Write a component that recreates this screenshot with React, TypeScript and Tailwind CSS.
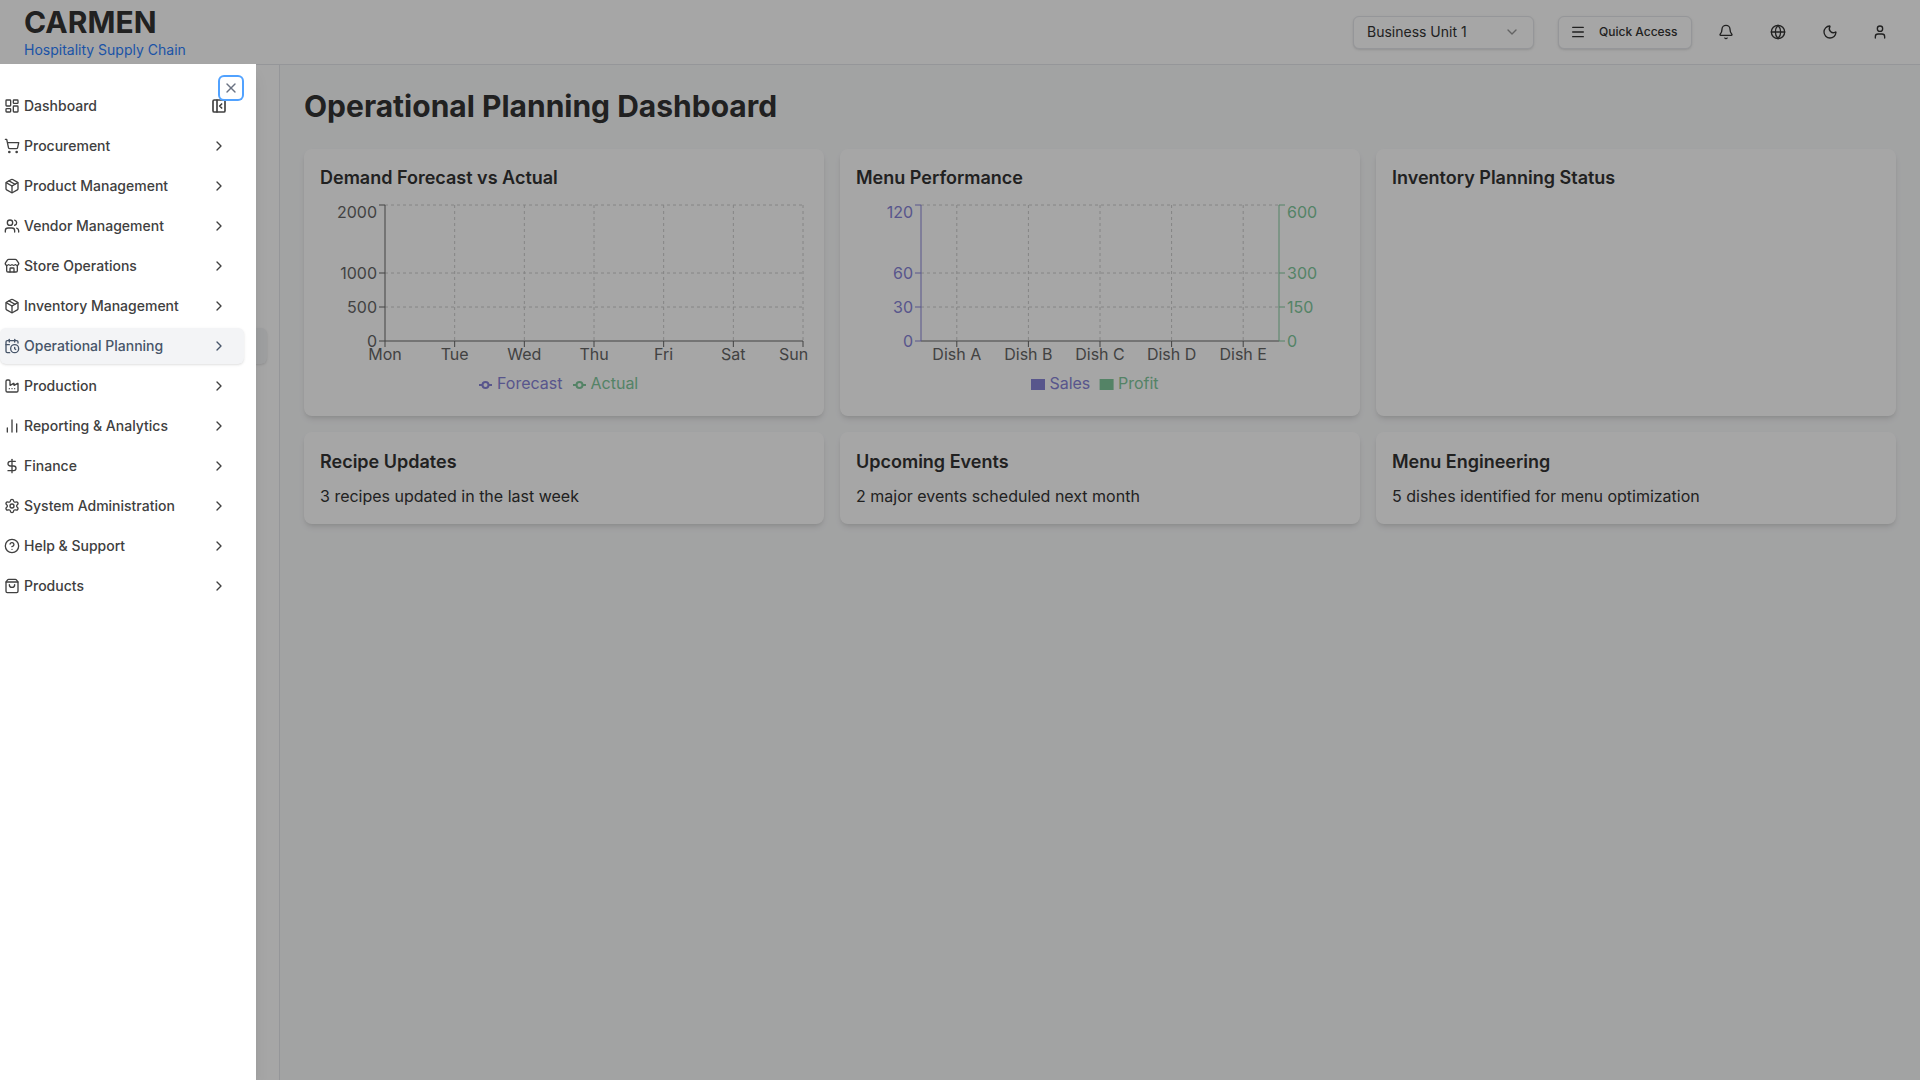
import React from "react";
import {
  LayoutDashboard, ShoppingCart, Package, Users, Store, CalendarClock, Factory,
  ChartNoAxesColumn, DollarSign, Settings, CircleHelp, ShoppingBag, ChevronRight,
  ChevronDown, Menu, Bell, Globe, Moon, User, X, PanelLeftClose,
} from "lucide-react";

const items = [
  { label: "Product Management", icon: Package },
  { label: "Vendor Management", icon: Users },
  { label: "Store Operations", icon: Store },
  { label: "Inventory Management", icon: Package },
  { label: "Operational Planning", icon: CalendarClock, active: true },
  { label: "Production", icon: Factory },
  { label: "Reporting & Analytics", icon: ChartNoAxesColumn },
  { label: "Finance", icon: DollarSign },
  { label: "System Administration", icon: Settings },
  { label: "Help & Support", icon: CircleHelp },
  { label: "Products", icon: ShoppingBag },
];

const GRID = "#cccccc";
const AXIS = "#666666";
const PURPLE = "#8884d8";
const GREEN = "#82ca9d";
const ys = [5, 73, 107, 141];

function DemandChart() {
  const x0 = 65;
  const x1 = 483;
  const xs = [65, 134.67, 204.33, 274, 343.67, 413.33, 483];
  const labels = ["Mon", "Tue", "Wed", "Thu", "Fri", "Sat", "Sun"];
  const yl = ["2000", "1000", "500", "0"];
  const yt = [12, 73, 107, 141];
  return (
    <svg width="488" height="200" className="block">
      <g stroke={GRID} strokeDasharray="3 3" fill="none">
        {ys.slice(0, 3).map((y) => <line key={y} x1={x0} x2={x1} y1={y} y2={y} />)}
        {xs.slice(1).map((x) => <line key={x} x1={x} x2={x} y1={5} y2={141} />)}
      </g>
      <g stroke={AXIS} fill="none">
        <line x1={x0} x2={x0} y1={5} y2={141} />
        <line x1={x0} x2={x1} y1={141} y2={141} />
        {ys.map((y) => <line key={y} x1={x0 - 6} x2={x0} y1={y} y2={y} />)}
        {xs.map((x) => <line key={x} x1={x} x2={x} y1={141} y2={147} />)}
      </g>
      <g fill={AXIS} fontSize="16" fontFamily="Inter, sans-serif">
        {yl.map((t, i) => <text key={t} x={57} y={yt[i] + 6} textAnchor="end">{t}</text>)}
        {labels.map((t, i) => (
          <text key={t} x={i === 6 ? 473.5 : xs[i]} y={160} textAnchor="middle">{t}</text>
        ))}
      </g>
      <g fontSize="16" fontFamily="Inter, sans-serif">
        <g stroke={PURPLE} strokeWidth="2" fill="none">
          <line x1={159} x2={172} y1={185} y2={185} />
          <circle cx={165.5} cy={185} r={3} fill="#ffffff" />
        </g>
        <text x={177} y={189} fill={PURPLE}>Forecast</text>
        <g stroke={GREEN} strokeWidth="2" fill="none">
          <line x1={253} x2={266} y1={185} y2={185} />
          <circle cx={259.5} cy={185} r={3} fill="#ffffff" />
        </g>
        <text x={270.5} y={189} fill={GREEN}>Actual</text>
      </g>
    </svg>
  );
}

function MenuChart() {
  const x0 = 65;
  const x1 = 423;
  const xs = [100.8, 172.4, 244, 315.6, 387.2];
  const labels = ["Dish A", "Dish B", "Dish C", "Dish D", "Dish E"];
  const yt = [12, 73, 107, 141];
  const left = ["120", "60", "30", "0"];
  const right = ["600", "300", "150", "0"];
  return (
    <svg width="488" height="200" className="block">
      <g stroke={GRID} strokeDasharray="3 3" fill="none">
        {ys.slice(0, 3).map((y) => <line key={y} x1={x0} x2={x1} y1={y} y2={y} />)}
        {xs.map((x) => <line key={x} x1={x} x2={x} y1={5} y2={141} />)}
      </g>
      <g stroke={AXIS} fill="none">
        <line x1={x0} x2={x1} y1={141} y2={141} />
        {xs.map((x) => <line key={x} x1={x} x2={x} y1={141} y2={147} />)}
      </g>
      <g stroke={PURPLE} fill="none">
        <line x1={x0} x2={x0} y1={5} y2={141} />
        {ys.map((y) => <line key={y} x1={x0 - 6} x2={x0} y1={y} y2={y} />)}
      </g>
      <g stroke={GREEN} fill="none">
        <line x1={x1} x2={x1} y1={5} y2={141} />
        {ys.map((y) => <line key={y} x1={x1} x2={x1 + 6} y1={y} y2={y} />)}
      </g>
      <g fontSize="16" fontFamily="Inter, sans-serif">
        {left.map((t, i) => <text key={t} x={57} y={yt[i] + 6} textAnchor="end" fill={PURPLE}>{t}</text>)}
        {right.map((t, i) => <text key={t} x={431} y={yt[i] + 6} fill={GREEN}>{t}</text>)}
        {labels.map((t, i) => <text key={t} x={xs[i]} y={160} textAnchor="middle" fill={AXIS}>{t}</text>)}
        <rect x={175} y={179} width={14} height={11} fill={PURPLE} />
        <text x={193.4} y={189} fill={PURPLE}>Sales</text>
        <rect x={243.6} y={179} width={14} height={11} fill={GREEN} />
        <text x={262} y={189} fill={GREEN}>Profit</text>
      </g>
    </svg>
  );
}

function Card({ title, children, top }: { title: string; children?: React.ReactNode; top?: boolean }) {
  return (
    <div className="rounded-lg bg-white p-4 shadow-md">
      <h3 className={`text-lg font-semibold text-[#333333] ${top ? "leading-[26px]" : "leading-7"}`}>{title}</h3>
      {children}
    </div>
  );
}

function NavRow({ label, icon: Icon, active }: { label: string; icon: React.ElementType; active?: boolean }) {
  return (
    <div className={`mb-1 flex h-9 w-[244px] items-center rounded-md pl-1 pr-3 ${active ? "bg-gray-100 text-[#475569] shadow-sm" : "text-[#404040]"}`}>
      <Icon size={16} strokeWidth={2} className="shrink-0" />
      <span className="ml-[4px] flex-1 text-sm font-medium">{label}</span>
      <ChevronRight size={16} className="mr-[5px] shrink-0" />
    </div>
  );
}

export default function App() {
  return (
    <div className="relative flex h-[1080px] flex-col overflow-hidden bg-gray-50 font-['Inter',sans-serif]">
      <header className="flex h-[65px] shrink-0 items-center justify-between border-b border-gray-200 bg-white pl-6 pr-8">
        <div className="flex flex-col">
          <div className="text-3xl leading-[36px] font-bold text-[#333333]">CARMEN</div>
          <div className="text-sm leading-5 text-blue-500">Hospitality Supply Chain</div>
        </div>
        <div className="flex items-center text-[#333333]">
          <div className="flex h-[33px] w-[181px] items-center justify-between rounded-md border border-gray-200 bg-white px-[13px] text-sm shadow-sm">
            <span>Business Unit 1</span>
            <ChevronDown size={16} className="opacity-50" />
          </div>
          <div className="ml-6 flex h-[33px] w-[134px] items-center rounded-md border border-gray-200 bg-white pl-[11px] text-xs font-medium shadow-sm">
            <Menu size={16} />
            <span className="ml-[13px]">Quick Access</span>
          </div>
          <div className="ml-[26px] flex items-center gap-9">
            <Bell size={16} />
            <Globe size={16} />
            <Moon size={16} />
            <User size={16} className="-ml-0.5" />
          </div>
        </div>
      </header>

      <div className="flex min-h-0 flex-1">
        <aside className="w-[280px] shrink-0 border-r border-gray-200 bg-white pt-[263px]">
          <div className="h-9 w-[267px] rounded-md bg-gray-100 shadow-sm" />
        </aside>
        <main className="flex-1 px-6 pt-[23px]">
          <h1 className="text-3xl leading-9 font-bold text-[#333333]">Operational Planning Dashboard</h1>
          <div className="mt-[25px] grid grid-cols-3 gap-4">
            <Card top title="Demand Forecast vs Actual"><div className="mt-[9px]"><DemandChart /></div></Card>
            <Card top title="Menu Performance"><div className="mt-[9px]"><MenuChart /></div></Card>
            <Card top title="Inventory Planning Status" />
            <Card title="Recipe Updates"><p className="mt-2 text-base leading-6 text-[#333333]">3 recipes updated in the last week</p></Card>
            <Card title="Upcoming Events"><p className="mt-2 text-base leading-6 text-[#333333]">2 major events scheduled next month</p></Card>
            <Card title="Menu Engineering"><p className="mt-2 text-base leading-6 text-[#333333]">5 dishes identified for menu optimization</p></Card>
          </div>
        </main>
      </div>

      <div className="absolute inset-0 bg-black/35" />

      <div className="absolute bottom-0 left-0 top-[64px] w-[256px] bg-white pt-6 shadow-lg">
        <button className="absolute left-[220px] top-[13px] flex h-[22px] w-[22px] items-center justify-center rounded-[4px] text-gray-500 ring-2 ring-blue-400">
          <X size={16} />
        </button>
        <div className="mb-1 flex h-9 w-[244px] items-center pl-1 text-[#404040]">
          <LayoutDashboard size={16} className="shrink-0" />
          <span className="ml-[4px] flex-1 text-sm font-medium">Dashboard</span>
          <PanelLeftClose size={16} strokeWidth={2.5} className="mr-[17px] shrink-0" />
        </div>
        <NavRow label="Procurement" icon={ShoppingCart} />
        {items.map((it) => <NavRow key={it.label} label={it.label} icon={it.icon} active={it.active} />)}
      </div>
    </div>
  );
}
